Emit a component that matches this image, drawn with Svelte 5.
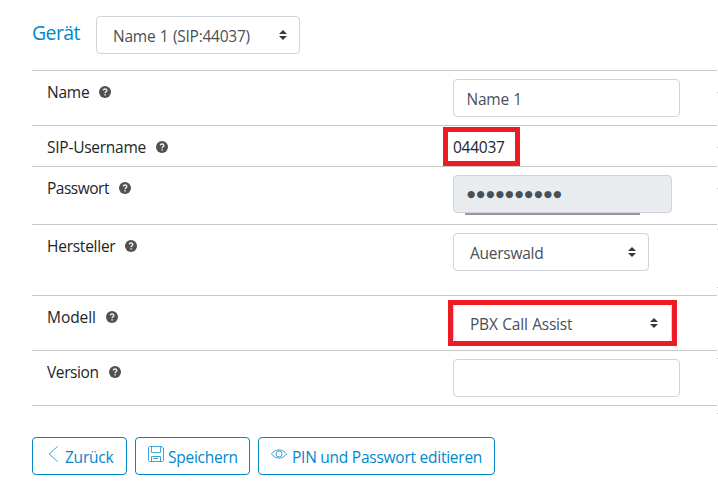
<script>
  const rows = [
    { label: 'Name', height: 55, kind: 'input', value: 'Name 1', width: 227, tick: 22 },
    { label: 'SIP-Username', height: 41, kind: 'text', value: '044037', tick: 22 },
    { label: 'Passwort', height: 58, kind: 'password', value: '●●●●●●●●●●', width: 219, tick: 22, tracking: -0.5 },
    { label: 'Hersteller', height: 71, kind: 'select', value: 'Auerswald', width: 196, tick: 5, tick2: 63 },
    { label: 'Modell', height: 55, kind: 'select', value: 'PBX Call Assist', width: 219, marked: true, tracking: -0.05 },
    { label: 'Version', height: 55, kind: 'input', value: '', width: 227, tick: 8, tracking: -0.4 }
  ];
</script>

{#snippet arrows()}
  <svg class="arrows" width="8" height="10" viewBox="0 0 8 10"><path fill="#343a40" d="M4 0L0 4h8zM4 10L0 6h8z" /></svg>
{/snippet}

<main>
  <header>
    <h1>Gerät</h1>
    <div class="control select" style="width: 204px"><span class="sip">Name 1 (SIP:44037)</span>{@render arrows()}</div>
  </header>

  <section>
    {#each rows as row}
      <div class="row" style="height: {row.height}px">
        <div class="label">
          <span style="letter-spacing: {row.tracking ?? -0.25}px">{row.label}</span>
          <svg width="12" height="12" viewBox="0 0 12 12">
            <circle cx="6" cy="6" r="6" fill="#505050" />
            <path d="M4.2 4.4C4.3 2.5 7.9 2.5 7.9 4.4C7.9 5.7 6.1 5.6 6.1 7.2" fill="none" stroke="#eee" stroke-width="1.3" />
            <rect x="5.4" y="8.2" width="1.4" height="1.4" fill="#eee" />
          </svg>
        </div>
        <div class="value">
          {#if row.kind === 'text'}
            <span class="plain">{row.value}</span><i class="mark number"></i>
          {:else}
            <div class="control {row.kind}" class:marked={row.marked} style="width: {row.width}px">
              <span>{row.value}</span>
              {#if row.kind === 'select'}{@render arrows()}{/if}
              {#if row.kind === 'password'}<i class="shade"></i>{/if}
              {#if row.marked}<i class="mark model"></i>{/if}
            </div>
          {/if}
        </div>
        {#if row.tick}<i class="tick" style="top: {row.tick}px"></i>{/if}
        {#if row.tick2}<i class="tick" style="top: {row.tick2}px"></i>{/if}
      </div>
    {/each}
    <div class="row end"><i class="tick" style="top: 8px"></i></div>
  </section>

  <footer>
    <button class="back">
      <svg width="16" height="18" viewBox="0 0 16 18"><path d="M12.5 1.5L4 9L12.5 16.5" /></svg>
      <span>Zurück</span>
    </button>
    <button class="save">
      <svg width="16" height="18" viewBox="0 0 16 18"><path d="M1.5 1.5h12l2 1.5v12.5l-1 1h-13l-1-1V2.5zM3.5 1.5v6h9v-6M3.5 16.5v-5h9v5M5 13.5h5" /></svg>
      <span>Speichern</span>
    </button>
    <button class="edit">
      <svg width="16" height="18" viewBox="0 0 16 18"><path d="M.5 9C4 3.5 12 3.5 15.5 9C12 14.5 4 14.5 .5 9z" /><circle cx="8" cy="9" r="3" /></svg>
      <span>PIN und Passwort editieren</span>
    </button>
  </footer>
</main>

<style>
  :global(body) { margin: 0; background: #fff; }
  main {
    box-sizing: border-box;
    width: 718px;
    height: 485px;
    padding: 16px 0 0 32px;
    overflow: hidden;
    font: 15.5px/24px "Open Sans", "Noto Sans", sans-serif;
    letter-spacing: -0.25px;
    color: #212529;
    white-space: nowrap;
  }
  header { display: flex; height: 54px; }
  h1 { width: 64px; margin: 4px 0 0; font-size: 19.5px; font-weight: 400; line-height: 26px; letter-spacing: -0.6px; color: #0088cb; }
  .control {
    position: relative;
    display: flex;
    justify-content: space-between;
    align-items: center;
    box-sizing: border-box;
    height: 38px;
    padding: 2px 12px 0 12.5px;
    border: 1px solid #ced4da;
    border-radius: 4px;
    color: #495057;
    background: #fff;
    word-spacing: 0.7px;
  }
  .select { padding-left: 16px; }
  .marked { padding-right: 13px; }
  .marked span { letter-spacing: -0.2px; }
  .arrows { display: block; margin-top: -3px; }
  .password { background: #e9ecef; font-family: "DejaVu Sans", sans-serif; font-size: 9.5px; letter-spacing: 1.3px; padding: 0 12px 1px 13px; }
  .shade { position: absolute; left: 11px; top: 37px; width: 175px; height: 2px; background: #999; }
  .row {
    position: relative;
    display: flex;
    box-sizing: border-box;
  }
  .row::before { content: ""; position: absolute; left: 0; top: 0; width: 685px; height: 1px; background: #c8c8c8; }
  .end { height: 32px; }
  .label { display: flex; box-sizing: border-box; width: 421px; padding: 10px 0 0 15px; }
  .label svg { margin: 6px 0 0 10px; }
  .value { position: relative; padding-top: 9px; }
  .plain { display: block; padding-top: 1px; }
  .tick { position: absolute; left: 685px; width: 1px; height: 1px; background: #c8c8c8; }
  .mark { position: absolute; box-sizing: border-box; border: 5px solid #ed1c24; }
  .number { left: -10px; top: 2px; width: 77px; height: 39px; }
  .model { left: -6px; top: -5px; width: 229px; height: 46px; }
  footer { display: flex; gap: 8px; }
  button {
    display: flex;
    align-items: center;
    box-sizing: border-box;
    height: 38px;
    padding: 0 0 0 12px;
    border: 1px solid #0088cb;
    border-radius: 4px;
    background: #fff;
    color: #0088cb;
    font: inherit;
    letter-spacing: inherit;
  }
  button svg { margin: -4px 4px 0 0; fill: none; stroke: currentColor; stroke-width: 0.75; flex: none; }
  button span { padding-top: 2px; }
  .back { width: 95px; }
  .back svg { margin-right: 4px; }
  .save { width: 115px; }
  .edit { width: 237px; }
  .edit svg { margin-right: 5px; }
</style>
